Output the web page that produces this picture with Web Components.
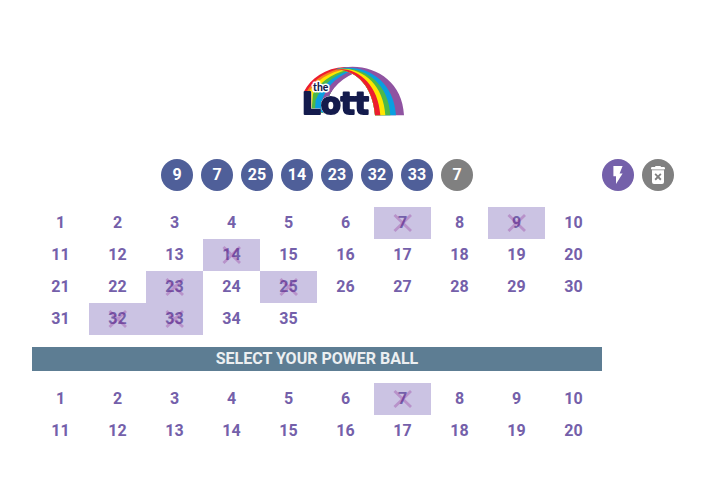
<!DOCTYPE html>
<html lang="en">
<head>
<meta charset="utf-8">
<meta name="viewport" content="width=device-width, initial-scale=1">
<title>the Lott</title>
<style>
body { margin: 0; background: #fff; font-family: Roboto, "Liberation Sans", sans-serif; font-size: 16px; line-height: 24px; }
</style>
</head>
<body>
<lott-app></lott-app>
<script>
const define = (name, html, setup) => customElements.define(name, class extends HTMLElement {
  connectedCallback() {
    if (this.shadowRoot) return;
    const t = document.createElement('template');
    t.innerHTML = html;
    this.attachShadow({ mode: 'open' }).append(t.content.cloneNode(true));
    if (setup) setup(this, this.shadowRoot);
  }
});

define('lott-logo', `
<style>
:host { display: block; width: 116px; }
svg { display: block; width: 100%; }
text { fill: #141b4d; stroke-linejoin: round; font-family: Lato, sans-serif; font-weight: 900; }
.name { font-family: "DejaVu Sans", sans-serif; font-weight: 700; stroke: #141b4d; filter: drop-shadow(0 0 2px #fff) drop-shadow(0 0 2px #fff); }
</style>
<svg viewBox="0 0 348 186" role="img" aria-label="the Lott">
  <path fill="#ed1c2e" d="M26 96C48 54 90 24 150 21L195 30C135 40 100 90 88 160L50 150Z"/>
  <path fill="#f58220" d="M34 96C56 58 96 30 152 24L195 30C135 40 100 90 88 160L50 150Z"/>
  <path fill="#ffe600" d="M42 96C62 64 100 36 155 27L195 30C135 40 100 90 88 160L50 150Z"/>
  <path fill="#4db848" d="M54 102C70 72 108 40 158 30L195 30C135 40 100 90 88 160L50 150Z"/>
  <path fill="#0a9fe0" d="M62 120C78 80 112 46 162 32L195 30C135 40 100 90 88 160L60 150Z"/>
  <path fill="#8f53a1" d="M78 130C92 84 118 54 166 34L200 32C142 48 108 86 91 130Z"/>
  <path fill="#8f53a1" d="M120 28C215 0 322 50 327 166H240C234 85 190 30 120 28Z"/>
  <path fill="#0a9fe0" d="M120 28C207 7 297 58 303 166H240C234 85 190 30 120 28Z"/>
  <path fill="#4db848" d="M120 28C201 12 281 64 286 166H240C234 85 190 30 120 28Z"/>
  <path fill="#ffe600" d="M120 28C196 16 266 69 271 166H240C234 85 190 30 120 28Z"/>
  <path fill="#ed1c2e" d="M120 28C190 20 250 75 256 166H240C234 85 190 30 120 28Z"/>
  <text class="name" x="21" y="163" font-size="88" stroke-width="6">Lott</text>
  <text x="54" y="92" font-size="31" stroke="#fff" stroke-width="9" paint-order="stroke">the</text>
</svg>`);

define('drawn-ball', `
<style>
:host { display: grid; place-items: center; width: 32px; height: 32px; border-radius: 50%; background: #4f5f99; color: #fff; font-weight: 700; }
:host([power]) { background: #808080; }
</style>
<slot></slot>`);

define('round-action', `
<style>
:host { display: block; }
button { display: grid; place-items: center; width: 32px; height: 32px; padding: 0; border: 0; border-radius: 50%; background: #7460aa; color: #fff; cursor: pointer; }
:host([muted]) button { background: #808080; }
</style>
<button type="button"><slot></slot></button>`, (host, root) => {
  root.querySelector('button').setAttribute('aria-label', host.getAttribute('label'));
});

define('number-cell', `
<style>
:host { display: block; }
button { display: grid; place-items: center; width: 100%; height: 32px; padding: 0; border: 0; background: transparent; color: #7460aa; font: inherit; font-weight: 700; cursor: pointer; }
span, svg { grid-area: 1 / 1; }
svg { display: none; width: 24px; height: 24px; }
button[aria-pressed=true] { background: #cbc3e3; }
button[aria-pressed=true] svg { display: block; }
</style>
<button type="button"><span><slot></slot></span><svg viewBox="0 0 24 24" aria-hidden="true"><path d="M3.500 4L20 20M20 4L3.500 20" fill="none" stroke="#800080" stroke-opacity=".25" stroke-width="2.800"/></svg></button>`, (host, root) => {
  const b = root.querySelector('button');
  b.setAttribute('aria-pressed', host.hasAttribute('selected'));
  b.addEventListener('click', () => b.setAttribute('aria-pressed', b.getAttribute('aria-pressed') !== 'true'));
});

define('number-board', `
<style>
:host { display: grid; grid-template-columns: repeat(10, 1fr); }
</style>`, (host, root) => {
  const picked = host.getAttribute('picked').split(',').map(Number);
  for (let i = 1; i <= Number(host.getAttribute('count')); i++) {
    const c = document.createElement('number-cell');
    c.textContent = i;
    c.toggleAttribute('selected', picked.includes(i));
    root.append(c);
  }
});

define('section-banner', `
<style>
:host { display: block; background: #5d7d93; color: #eceff1; text-align: center; font-weight: 700; text-transform: uppercase; }
</style>
<slot></slot>`);

define('lott-app', `
<style>
:host { display: block; padding: 60px 31px 32px 32px; }
header { display: flex; justify-content: center; margin-bottom: 37px; }
main { display: grid; grid-template-columns: 1fr auto; row-gap: 16px; }
.balls, .actions { display: flex; gap: 8px; }
.balls { justify-content: center; }
.boards { display: grid; gap: 12px; }
svg { display: block; width: 24px; height: 24px; fill: currentColor; }
</style>
<header><lott-logo></lott-logo></header>
<main>
  <div class="balls">
    <drawn-ball>9</drawn-ball><drawn-ball>7</drawn-ball><drawn-ball>25</drawn-ball><drawn-ball>14</drawn-ball><drawn-ball>23</drawn-ball><drawn-ball>32</drawn-ball><drawn-ball>33</drawn-ball><drawn-ball power>7</drawn-ball>
  </div>
  <div class="actions">
    <round-action label="Quick pick"><svg viewBox="0 0 24 24"><path d="M7.400 3v10.200h2.600V21l6.600-10.600h-3L16.600 3z"/></svg></round-action>
    <round-action label="Clear all" muted><svg viewBox="0 0 24 24"><rect x="5" y="4" width="14" height="2.400" rx="1.200"/><rect x="9" y="3" width="6" height="2.500" rx="1"/><path fill-rule="evenodd" d="M6 7.300H18V19q0 2-2 2H8q-2 0-2-2zM9.800 10.200L8.500 11.500 10.700 13.800 8.500 16.100 9.800 17.400 12 15.200 14.200 17.400 15.500 16.100 13.300 13.800 15.500 11.500 14.200 10.200 12 12.400z"/></svg></round-action>
  </div>
  <div class="boards">
    <number-board count="35" picked="7,9,14,23,25,32,33"></number-board>
    <section-banner>Select your Power Ball</section-banner>
    <number-board count="20" picked="7"></number-board>
  </div>
</main>`);
</script>
</body>
</html>
